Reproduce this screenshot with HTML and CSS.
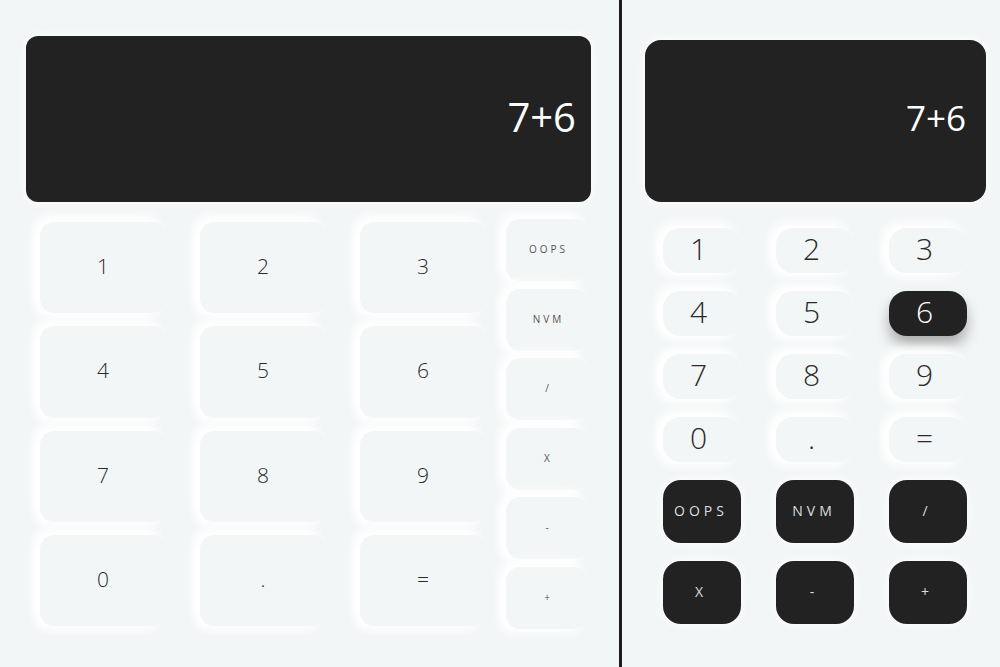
FILE: index.html
```html
<!DOCTYPE html>
<html lang="en">
<head>
<meta charset="utf-8">
<title>Calculator</title>
<link rel="stylesheet" href="styles.css">
</head>
<body>
<div class="page">
  <section class="calc calc-wide">
    <div class="screen screen-wide"><span class="screen-text">7+6</span></div>
    <div class="pad-wide">
      <div class="digits-wide">
        <button class="key key-wide">1</button>
        <button class="key key-wide">2</button>
        <button class="key key-wide">3</button>
        <button class="key key-wide">4</button>
        <button class="key key-wide">5</button>
        <button class="key key-wide">6</button>
        <button class="key key-wide">7</button>
        <button class="key key-wide">8</button>
        <button class="key key-wide">9</button>
        <button class="key key-wide">0</button>
        <button class="key key-wide">.</button>
        <button class="key key-wide">=</button>
      </div>
      <div class="ops-wide">
        <button class="key op-wide">OOPS</button>
        <button class="key op-wide">NVM</button>
        <button class="key op-wide">/</button>
        <button class="key op-wide">X</button>
        <button class="key op-wide">-</button>
        <button class="key op-wide">+</button>
      </div>
    </div>
  </section>
  <div class="divider"></div>
  <section class="calc calc-narrow">
    <div class="screen screen-narrow"><span class="screen-text">7+6</span></div>
    <div class="pad-narrow">
      <button class="key key-narrow">1</button>
      <button class="key key-narrow">2</button>
      <button class="key key-narrow">3</button>
      <button class="key key-narrow">4</button>
      <button class="key key-narrow">5</button>
      <button class="key key-narrow is-hover">6</button>
      <button class="key key-narrow">7</button>
      <button class="key key-narrow">8</button>
      <button class="key key-narrow">9</button>
      <button class="key key-narrow">0</button>
      <button class="key key-narrow">.</button>
      <button class="key key-narrow">=</button>
      <button class="key op-narrow">OOPS</button>
      <button class="key op-narrow">NVM</button>
      <button class="key op-narrow">/</button>
      <button class="key op-narrow">X</button>
      <button class="key op-narrow">-</button>
      <button class="key op-narrow">+</button>
    </div>
  </section>
</div>
</body>
</html>
```

FILE: styles.css
```css
* { box-sizing: border-box; }

html, body {
  margin: 0;
  padding: 0;
  background: #f3f6f7;
  font-family: "Open Sans", "Noto Sans", sans-serif;
  color: #333;
}

.page {
  display: flex;
  width: 1000px;
  height: 667px;
  overflow: hidden;
}

.calc {
  height: 667px;
}

.calc-wide {
  width: 619px;
  padding: 36px 28px 0 26px;
}

.divider {
  width: 3px;
  height: 667px;
  background: #1c1c1c;
  flex: none;
}

.calc-narrow {
  flex: 1;
  padding: 40px 0 0 23px;
}

.screen {
  background: #222;
  color: #fff;
  display: flex;
  align-items: center;
  justify-content: flex-end;
  box-shadow: 0 0 10px #fff;
}

.screen-wide {
  width: 565px;
  height: 166px;
  border-radius: 12px;
  padding-right: 15px;
  padding-bottom: 4px;
  font-size: 40px;
}

.screen-narrow {
  width: 341px;
  height: 162px;
  border-radius: 16px;
  padding-right: 20px;
  padding-bottom: 8px;
  font-size: 35px;
}

.screen-text {
  line-height: 1;
}

.key {
  border: 0;
  margin: 0;
  padding: 0;
  font-family: inherit;
  background: #f3f6f7;
  color: #2a2a2a;
  display: flex;
  align-items: center;
  justify-content: center;
  box-shadow: -6px -6px 10px #fff, -6px 4px 9px #fff;
}

/* wide calculator */
.pad-wide {
  display: flex;
  gap: 20px;
  margin-top: 17px;
  padding-left: 14px;
}

.digits-wide {
  margin-top: 3px;
  width: 446px;
  height: 404px;
  display: grid;
  grid-template-columns: repeat(3, 126px);
  grid-template-rows: repeat(4, 1fr);
  column-gap: 34px;
  row-gap: 13px;
}

.key-wide {
  border-radius: 14px;
  font-size: 21px;
  font-weight: 300;
  padding-bottom: 3px;
}

.ops-wide {
  width: 82px;
  display: flex;
  flex-direction: column;
  gap: 7.6px;
}

.op-wide {
  height: 62px;
  border-radius: 14px;
  font-size: 10px;
  letter-spacing: 3px;
  padding-left: 3px;
  padding-bottom: 2px;
  color: #555;
}

/* narrow calculator */
.pad-narrow {
  margin-top: 26px;
  margin-left: 18px;
  display: grid;
  grid-template-columns: repeat(3, 78px);
  grid-template-rows: repeat(4, 45px) repeat(2, 63px);
  column-gap: 35px;
  row-gap: 18px;
}

.key-narrow {
  border-radius: 17px;
  font-size: 30px;
  font-weight: 300;
  padding-bottom: 4px;
  padding-right: 7px;
}

.key-narrow.is-hover {
  background: #222;
  color: #fff;
  border-radius: 18px;
  box-shadow: 0 9px 14px rgba(0, 0, 0, 0.3);
}

.op-narrow {
  background: #222;
  color: #ddd;
  border-radius: 18px;
  font-size: 14px;
  letter-spacing: 4px;
  padding-left: 0;
  padding-right: 2px;
  padding-bottom: 2px;
  box-shadow: 0 0 10px #fff;
}
```
